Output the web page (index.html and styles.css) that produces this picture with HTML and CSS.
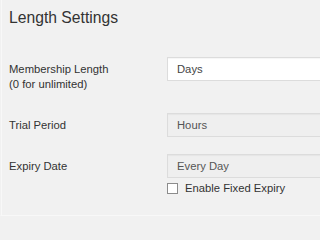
FILE: index.html
```html
<!DOCTYPE html>
<html>
<head>
<meta charset="utf-8">
<link rel="stylesheet" href="styles.css">
</head>
<body>
<div class="panel">
  <h2 class="title">Length Settings</h2>
  <div class="row row-length">
    <label class="label">Membership Length<br>(0 for unlimited)</label>
    <div class="field">
      <div class="input">Days</div>
    </div>
  </div>
  <div class="row row-trial">
    <label class="label">Trial Period</label>
    <div class="field">
      <div class="input input-muted">Hours</div>
    </div>
  </div>
  <div class="row row-expiry">
    <label class="label">Expiry Date</label>
    <div class="field">
      <div class="input input-muted">Every Day</div>
      <label class="check"><span class="box"></span>Enable Fixed Expiry</label>
    </div>
  </div>
</div>
</body>
</html>
```

FILE: styles.css
```css
html, body {
  margin: 0;
  padding: 0;
  overflow: hidden;
  background: #f1f1f1;
}
body {
  font-family: "Liberation Sans", Arial, sans-serif;
  color: #333;
}
.panel {
  height: 216px;
  box-sizing: border-box;
  border-left: 1px solid #f1f1f1;
  border-bottom: 1px solid #f8f8f8;
  padding-left: 8px;
  box-shadow: inset 1px 0 0 #f8f8f8;
  overflow: hidden;
}
.title {
  margin: 0;
  padding-top: 8px;
  font-size: 15.7px;
  line-height: 20px;
  font-weight: normal;
  color: #333;
  height: 49px;
}
.row {
  display: flex;
  align-items: flex-start;
}
.row-length { height: 56px; }
.row-trial { height: 41px; }
.label {
  width: 158px;
  flex: none;
  padding-top: 5px;
  font-size: 11.25px;
  line-height: 15px;
  color: #333;
}
.field {
  flex: none;
  width: 240px;
  display: flex;
  flex-direction: column;
}
.input {
  box-sizing: border-box;
  height: 24px;
  border: 1px solid #dcdcdc;
  background: #fff;
  padding-left: 9px;
  font-size: 11.25px;
  line-height: 22px;
  color: #444;
  box-shadow: inset 0 1px 1px rgba(0,0,0,0.04);
}
.input-muted {
  background: #efefef;
  color: #555;
}
.check {
  display: flex;
  align-items: center;
  margin-top: 4px;
  font-size: 11.25px;
  line-height: 12px;
  color: #333;
}
.box {
  width: 11px;
  height: 11px;
  box-sizing: border-box;
  border: 1px solid #8c8c8c;
  background: #fff;
  margin-right: 7px;
}
```
